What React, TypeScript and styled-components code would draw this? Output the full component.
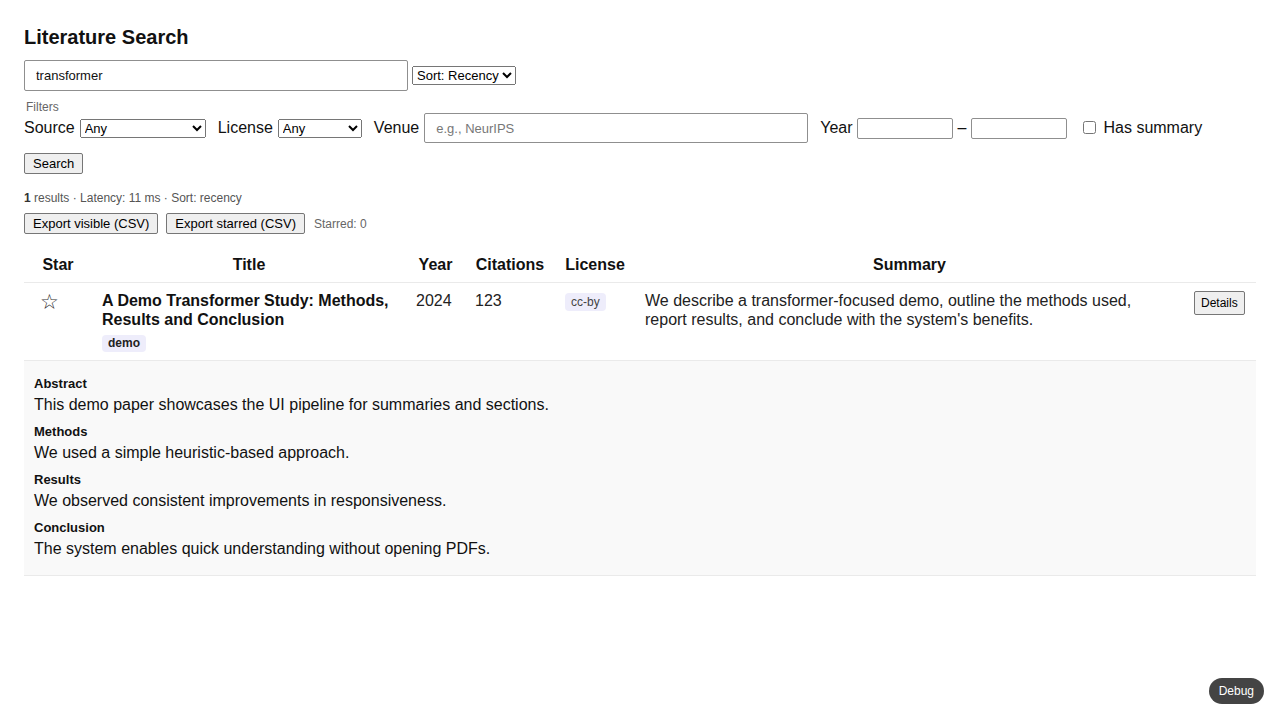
import React from "react";
import styled, { createGlobalStyle } from "styled-components";

const Global = createGlobalStyle`
  html, body { margin: 0; padding: 0; background: #fff; }
  body { font-family: "Liberation Sans", Arial, sans-serif; color: #111; }
  button, input, select { font-family: "Liberation Sans", Arial, sans-serif; }
`;

const Page = styled.div`
  padding: 24px;
`;

const Heading = styled.h1`
  margin: 0 0 10px;
  font-size: 20px;
  line-height: 26px;
  font-weight: 700;
`;

const SearchRow = styled.div`
  display: flex;
  align-items: center;
  gap: 4px;
`;

const TextInput = styled.input<{ $w: number; $h?: number }>`
  box-sizing: border-box;
  width: ${(p) => p.$w}px;
  height: ${(p) => p.$h ?? 31}px;
  padding: 6px 11px;
  font-size: 13px;
  border: 1px solid #8f8f8f;
  border-radius: 2px;
  color: #111;
  &::placeholder { color: #777; }
`;

const Select = styled.select<{ $w?: number }>`
  font-size: 13px;
  height: 19px;
  ${(p) => (p.$w ? `width: ${p.$w}px;` : "")}
`;

const Fieldset = styled.fieldset`
  border: none;
  margin: 9px 0 0;
  padding: 0;
  min-width: 0;
`;

const Legend = styled.legend`
  padding: 0 2px;
  font-size: 12px;
  line-height: 14px;
  color: #666;
`;

const FilterRow = styled.div`
  display: flex;
  flex-wrap: wrap;
  align-items: center;
  gap: 12px;
  font-size: 16px;
  margin-top: -1px;
`;

const Field = styled.label<{ $gap?: number }>`
  display: inline-flex;
  align-items: center;
  gap: ${(p) => p.$gap ?? 5}px;
`;

const SmallInput = styled.input`
  box-sizing: border-box;
  width: 96px;
  height: 21px;
  font-size: 13px;
  border: 1px solid #8f8f8f;
  border-radius: 2px;
`;

const Dash = styled.span`
  margin: 0 1px;
`;

const CheckField = styled.label`
  display: inline-flex;
  align-items: center;
  gap: 4px;
  margin-left: 4px;
  input { margin: 0 3px 2px 0; width: 13px; height: 13px; }
`;

const Btn = styled.button<{ $size?: number }>`
  font-size: ${(p) => p.$size ?? 13}px;
  padding: 2px 8px;
  border: 1px solid #767676;
  border-radius: 2px;
  background: #efefef;
  color: #000;
  line-height: 15px;
`;

const SearchBtnWrap = styled.div`
  margin-top: 10px;
`;

const Meta = styled.div`
  margin-top: 17px;
  font-size: 12px;
  line-height: 14px;
  color: #555;
  b { color: #333; }
`;

const ExportRow = styled.div`
  margin-top: 8px;
  display: flex;
  align-items: center;
  gap: 8px;
`;

const Muted = styled.span`
  font-size: 12px;
  color: #666;
  margin-left: 1px;
`;

const Table = styled.table`
  margin-top: 13px;
  width: 100%;
  border-collapse: collapse;
  table-layout: fixed;
  font-size: 16px;
`;

const Th = styled.th<{ $w?: number }>`
  ${(p) => (p.$w ? `width: ${p.$w}px;` : "")}
  padding: 9px 10px 8px;
  line-height: 18px;
  font-weight: 700;
  text-align: center;
  border-bottom: 1px solid #eaeaea;
  color: #111;
`;

const Td = styled.td`
  padding: 8px 10px;
  vertical-align: top;
  line-height: 19px;
  color: #222;
  border-bottom: 1px solid #eaeaea;
`;

const StarBtn = styled.button`
  background: none;
  border: none;
  padding: 0 6px;
  font-size: 21px;
  line-height: 22px;
  color: #333;
  font-family: "DejaVu Sans", sans-serif;
  cursor: pointer;
`;

const TitleText = styled.div`
  font-weight: 700;
  color: #111;
`;

const Chip = styled.span<{ $bold?: boolean }>`
  display: inline-block;
  padding: 1px 6px;
  font-size: 12px;
  line-height: 15px;
  border-radius: 4px;
  background: #eeedfb;
  color: ${(p) => (p.$bold ? "#222" : "#444")};
  font-weight: ${(p) => (p.$bold ? 700 : 400)};
`;

const TagRow = styled.div`
  margin-top: 3px;
`;

const LicenseChip = styled(Chip)`
  padding: 2px 6px;
  line-height: 14px;
`;

const DetailsBtn = styled(Btn)`
  padding: 4px 6px;
  font-size: 12px;
  line-height: 14px;
`;

const DetailCell = styled.td`
  padding: 0;
  background: #f9f9f9;
  border-bottom: 1px solid #eaeaea;
`;

const DetailBody = styled.div`
  display: flex;
  flex-direction: column;
  gap: 10px;
  padding: 15px 10px 17px;
`;

const Section = styled.div``;

const SectionLabel = styled.div`
  font-size: 13px;
  line-height: 15px;
  font-weight: 700;
  color: #111;
  margin-bottom: 4px;
`;

const SectionText = styled.div`
  font-size: 16px;
  line-height: 19px;
  color: #111;
`;

const DebugBtn = styled.button`
  position: fixed;
  right: 16px;
  bottom: 16px;
  background: #444;
  color: #fff;
  border: none;
  border-radius: 999px;
  font-size: 12px;
  line-height: 14px;
  padding: 6px 10px;
`;

const sections = [
  ["Abstract", "This demo paper showcases the UI pipeline for summaries and sections."],
  ["Methods", "We used a simple heuristic-based approach."],
  ["Results", "We observed consistent improvements in responsiveness."],
  ["Conclusion", "The system enables quick understanding without opening PDFs."],
];

export default function App() {
  return (
    <Page>
      <Global />
      <Heading>Literature Search</Heading>
      <SearchRow>
        <TextInput $w={384} defaultValue="transformer" />
        <Select defaultValue="recency">
          <option value="recency">Sort: Recency</option>
          <option value="citations">Sort: Citations</option>
        </Select>
      </SearchRow>
      <Fieldset>
        <Legend>Filters</Legend>
        <FilterRow>
          <Field>
            Source
            <Select $w={126}>
              <option>Any</option>
            </Select>
          </Field>
          <Field>
            License
            <Select $w={84}>
              <option>Any</option>
            </Select>
          </Field>
          <Field>
            Venue
            <TextInput $w={384} $h={30} placeholder="e.g., NeurIPS" />
          </Field>
          <Field $gap={4}>
            Year
            <SmallInput />
            <Dash>–</Dash>
            <SmallInput />
          </Field>
          <CheckField>
            <input type="checkbox" />
            Has summary
          </CheckField>
        </FilterRow>
      </Fieldset>
      <SearchBtnWrap>
        <Btn>Search</Btn>
      </SearchBtnWrap>
      <Meta>
        <b>1</b> results · Latency: 11 ms · Sort: recency
      </Meta>
      <ExportRow>
        <Btn>Export visible (CSV)</Btn>
        <Btn>Export starred (CSV)</Btn>
        <Muted>Starred: 0</Muted>
      </ExportRow>
      <Table>
        <thead>
          <tr>
            <Th $w={48}>Star</Th>
            <Th $w={294}>Title</Th>
            <Th $w={39}>Year</Th>
            <Th $w={70}>Citations</Th>
            <Th $w={60}>License</Th>
            <Th>Summary</Th>
            <Th $w={52}></Th>
          </tr>
        </thead>
        <tbody>
          <tr>
            <Td>
              <StarBtn>☆</StarBtn>
            </Td>
            <Td>
              <TitleText>A Demo Transformer Study: Methods, Results and Conclusion</TitleText>
              <TagRow>
                <Chip $bold>demo</Chip>
              </TagRow>
            </Td>
            <Td>2024</Td>
            <Td>123</Td>
            <Td>
              <LicenseChip>cc-by</LicenseChip>
            </Td>
            <Td>
              We describe a transformer-focused demo, outline the methods used, report results, and
              conclude with the system's benefits.
            </Td>
            <Td>
              <DetailsBtn>Details</DetailsBtn>
            </Td>
          </tr>
          <tr>
            <DetailCell colSpan={7}>
              <DetailBody>
                {sections.map(([label, text]) => (
                  <Section key={label}>
                    <SectionLabel>{label}</SectionLabel>
                    <SectionText>{text}</SectionText>
                  </Section>
                ))}
              </DetailBody>
            </DetailCell>
          </tr>
        </tbody>
      </Table>
      <DebugBtn>Debug</DebugBtn>
    </Page>
  );
}
